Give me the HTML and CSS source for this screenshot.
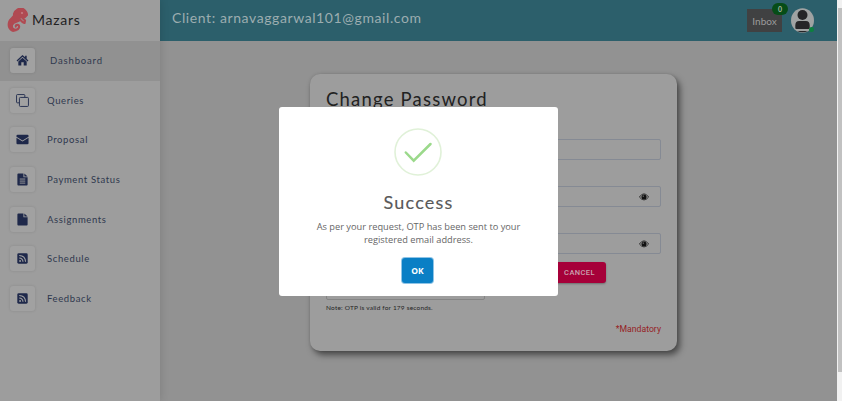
FILE: index.html
```html
<!DOCTYPE html>
<html lang="en">
<head>
<meta charset="utf-8">
<title>Change Password</title>
<link rel="stylesheet" href="styles.css">
</head>
<body>
<div class="app">
  <aside class="sidebar">
    <div class="brand">
      <svg class="logo" viewBox="0 0 21 25"><path d="M8 13C9 10 7 9 7 6C8 2 12 0 16 1C18 2 20 5 20 7Q18 10 15 9.500L18 12.500L17.500 15L15.500 14L13.500 12C11 14 6 13 5 17C4 21 8 23 11 21C13 19 12 16 9.500 17Q8 18 9.500 19" fill="none" stroke="#b04a52" stroke-width="2.200" stroke-linejoin="round"/><path d="M8 4C10 0 15 0 17 1L20 6L19 9L14 10C13 13 9 14 6 15L5 20L10 23L6 24C1 22 0 18 1 14C2 10 6 9 8 4Z" fill="#b04a52"/><circle cx="15" cy="5" r="1" fill="#c98086"/></svg>
      <span class="brand-name">Mazars</span>
    </div>
    <nav class="menu">
      <a class="item active"><span class="tile"><svg viewBox="0 0 14 14"><path d="M7 1L0.6 7L1.5 8L7 3L12.500 8L13.400 7L11.500 5.200V2H9.800V3.600Z"/><path d="M2.500 8L7 4L11.500 8V12.500H8.300V9H5.700V12.500H2.500Z"/></svg></span><span class="label label-wide">Dashboard</span></a>
      <a class="item"><span class="tile"><svg class="outline" viewBox="0 0 14 14"><path d="M3.500 9.500H1.500Q.6 9.500 .6 8.600V1.500Q.6 .6 1.500 .6H8.600Q9.500 .6 9.500 1.500V3.500"/><rect x="3.700" y="3.700" width="9.700" height="9.700" rx="1"/></svg></span><span class="label">Queries</span></a>
      <a class="item"><span class="tile"><svg viewBox="0 0 14 14"><path d="M.5 3Q.5 1.800 1.700 1.800H12.300Q13.500 1.800 13.500 3V4L7 8L.5 4ZM.5 5.200L7 9.200L13.500 5.200V11Q13.500 12.200 12.300 12.200H1.700Q.5 12.200 .5 11Z"/></svg></span><span class="label">Proposal</span></a>
      <a class="item"><span class="tile"><svg viewBox="0 0 14 14"><path d="M1.500 1.500Q1.500.5 2.500.5H8V4.500H12.500V12.500Q12.500 13.500 11.500 13.500H2.500Q1.500 13.500 1.500 12.500ZM9 .5L12.500 3.700H9Z"/><path d="M4 6.500H10M4 8.700H10M4 10.900H10" stroke="#9d9d9d"/></svg></span><span class="label">Payment Status</span></a>
      <a class="item"><span class="tile"><svg viewBox="0 0 14 14"><path d="M1.500 1.500Q1.500.5 2.500.5H8V4.500H12.500V12.500Q12.500 13.500 11.500 13.500H2.500Q1.500 13.500 1.500 12.500ZM9 .5L12.500 3.700H9Z"/></svg></span><span class="label">Assignments</span></a>
      <a class="item"><span class="tile"><svg viewBox="0 0 14 14"><rect x="1.400" y="1.400" width="11.200" height="11.200" rx="1.500"/><path d="M3.500 3.700Q10 4 10.300 10.500M3.500 6.500Q7.300 6.700 7.500 10.500" fill="none" stroke="#a2a2a2" stroke-width="1.200"/><circle cx="4.400" cy="9.700" r="1" fill="#a2a2a2"/></svg></span><span class="label">Schedule</span></a>
      <a class="item"><span class="tile"><svg viewBox="0 0 14 14"><rect x="1.400" y="1.400" width="11.200" height="11.200" rx="1.500"/><path d="M3.500 3.700Q10 4 10.300 10.500M3.500 6.500Q7.300 6.700 7.500 10.500" fill="none" stroke="#a2a2a2" stroke-width="1.200"/><circle cx="4.400" cy="9.700" r="1" fill="#a2a2a2"/></svg></span><span class="label">Feedback</span></a>
    </nav>
  </aside>
  <div class="page">
    <header class="topbar">
      <span class="client">Client: arnavaggarwal101@gmail.com</span>
      <div class="inbox"><span>Inbox</span><b class="badge">0</b></div>
      <svg class="avatar" viewBox="0 0 24 25"><ellipse cx="11.500" cy="12.500" rx="11.500" ry="12.200" fill="#a0a3a3"/><circle cx="11.500" cy="7" r="5" fill="#252527"/><path d="M4.300 20V17Q4.500 13 8 13H15Q18.500 13 18.700 17V20Q18.700 21 17.500 21H5.500Q4.300 21 4.300 20Z" fill="#252527"/><path d="M6 23H17Q11.500 25.500 6 23Z" fill="#252527"/><circle cx="20.500" cy="21.500" r="2.500" fill="#0d803f"/></svg>
    </header>
    <main class="content">
      <section class="card">
        <h1 class="heading">Change Password</h1>
        <div class="field"></div>
        <div class="field"><svg class="eye" viewBox="0 0 10 8"><path d="M.3 4Q5-2.500 9.700 4Q5 10 .3 4Z" fill="#8b8b8b" stroke="#202020" stroke-width=".7"/><circle cx="5" cy="3.900" r="2.500" fill="#111"/><circle cx="4.200" cy="3.100" r=".6" fill="#aaa"/></svg></div>
        <div class="field"><svg class="eye" viewBox="0 0 10 8"><path d="M.3 4Q5-2.500 9.700 4Q5 10 .3 4Z" fill="#8b8b8b" stroke="#202020" stroke-width=".7"/><circle cx="5" cy="3.900" r="2.500" fill="#111"/><circle cx="4.200" cy="3.100" r=".6" fill="#aaa"/></svg></div>
        <div class="actions"><div class="otp"></div><button class="cancel">CANCEL</button></div>
        <p class="note">Note: OTP is valid for 179 seconds.</p>
        <p class="mandatory">*Mandatory</p>
      </section>
    </main>
  </div>
  <div class="scrollbar"><div class="thumb"></div></div>
</div>
<div class="modal">
  <svg class="check" viewBox="0 0 48 48"><circle cx="24" cy="24" r="23" fill="none" stroke="#e0f1d8" stroke-width="1.600"/><path d="M11.800 24.500L19.700 32.700L36.500 16" fill="none" stroke="#9bd98b" stroke-width="2.500" stroke-linecap="round"/></svg>
  <h2 class="title">Success</h2>
  <p class="message">As per your request, OTP has been sent to your<br>registered email address.</p>
  <button class="ok">OK</button>
</div>
</body>
</html>
```
FILE: styles.css
```css
* { box-sizing: border-box; }
body { margin: 0; width: 842px; height: 401px; overflow: hidden; font-family: Lato, "Open Sans", sans-serif; background: #929292; }
h1, h2, p { margin: 0; font-weight: 400; }
.app { display: flex; height: 401px; }
.sidebar { width: 160px; background: #9d9d9d; box-shadow: 1px 0 8px rgba(0,0,0,.12); z-index: 1; }
.brand { height: 41px; display: flex; align-items: center; padding-left: 7px; gap: 4px; }
.logo { width: 21px; height: 25px; }
.brand-name { font-size: 14px; color: #222; letter-spacing: .75px; margin-top: -2px; }
.item { display: flex; align-items: center; height: 39.6px; padding-left: 10px; gap: 12px; }
.item.active { background: #919191; gap: 15px; }
.tile { width: 25px; height: 25px; border-radius: 3px; background: #a1a1a1; box-shadow: 0 0 3px rgba(0,0,0,.12); display: flex; align-items: center; justify-content: center; }
.tile svg { width: 13px; height: 13px; fill: #1e284a; }
.tile .outline { fill: none; stroke: #222c4e; }
.label { font-size: 9.5px; color: #2f384e; letter-spacing: .62px; white-space: nowrap; }
.label-wide { letter-spacing: .85px; }
.page { flex: 1; display: flex; flex-direction: column; }
.topbar { height: 41px; background: #2c5f6b; display: flex; align-items: center; padding: 0 22px 0 12px; }
.client { font-size: 14px; color: #9cadb0; white-space: nowrap; margin-top: -7px; letter-spacing: .59px; }
.inbox { position: relative; margin-left: auto; width: 35px; height: 23px; background: #404142; color: #9b9b9b; font-size: 10px; display: flex; align-items: center; justify-content: center; }
.badge { position: absolute; right: -6px; top: -6px; width: 16px; height: 12px; border-radius: 6px; background: #064d17; color: #a5b5a5; font-size: 7px; line-height: 12px; text-align: center; }
.avatar { width: 24px; height: 25px; margin-left: 9px; }
.content { flex: 1; padding: 33px 0 0 150px; }
.card { width: 367px; height: 277px; padding: 14px 16px; border-radius: 10px; background: #9d9d9d; box-shadow: 3px 4px 6px rgba(0,0,0,.5), 0 0 3px rgba(0,0,0,.12); }
.heading { height: 51px; font-size: 18.5px; line-height: 22px; color: #222; white-space: nowrap; letter-spacing: 1.2px; }
.field { height: 21px; margin-bottom: 26px; border: 1px solid #858a94; border-radius: 2px; display: flex; align-items: center; justify-content: flex-end; padding-right: 11px; }
.field:nth-of-type(3) { margin-bottom: 8px; }
.eye { width: 10px; height: 8px; }
.actions { display: flex; height: 38px; justify-content: space-between; padding-right: 55px; }
.otp { width: 159px; height: 21px; align-self: flex-end; border: 1px solid #858585; border-radius: 2px; }
.cancel { width: 53px; height: 21px; padding: 0; border: 0; border-radius: 3px; background: #a60039; color: #caa2b0; font: 500 7.5px/21px Roboto, sans-serif; letter-spacing: .4px; box-shadow: 0 1px 2px rgba(0,0,0,.3); }
.note { margin-top: 3px; height: 20px; font-size: 6.5px; line-height: 10px; color: #252525; white-space: nowrap; letter-spacing: .2px; }
.mandatory { text-align: right; font: 8.7px/12px Roboto, sans-serif; color: #961e25; }
.scrollbar { width: 5px; background: #f1f1f1; padding: 8px 0 0 1px; }
.thumb { height: 364px; background: #c1c1c1; }
.modal { position: absolute; z-index: 2; left: 279px; top: 107px; width: 279px; height: 189px; background: #fff; border-radius: 3px; display: flex; flex-direction: column; align-items: center; padding-top: 21px; }
.check { width: 48px; height: 48px; margin-right: 2px; }
.title { height: 44px; padding-top: 14px; font-size: 18px; line-height: 24px; color: #595959; white-space: nowrap; letter-spacing: 1.2px; -webkit-text-stroke: .15px #595959; }
.message { text-align: center; font: 9.25px/13px "Open Sans", sans-serif; color: #666; white-space: nowrap; height: 27px; }
.ok { margin: 11px 2px 0 0; width: 31px; height: 25px; flex: none; padding: 0; border: 0; border-radius: 3px; background: #0a7fc5; color: #fff; font: 700 8.5px/25px "Open Sans", sans-serif; box-shadow: 0 0 0 1px #8fc4e6; }
```
